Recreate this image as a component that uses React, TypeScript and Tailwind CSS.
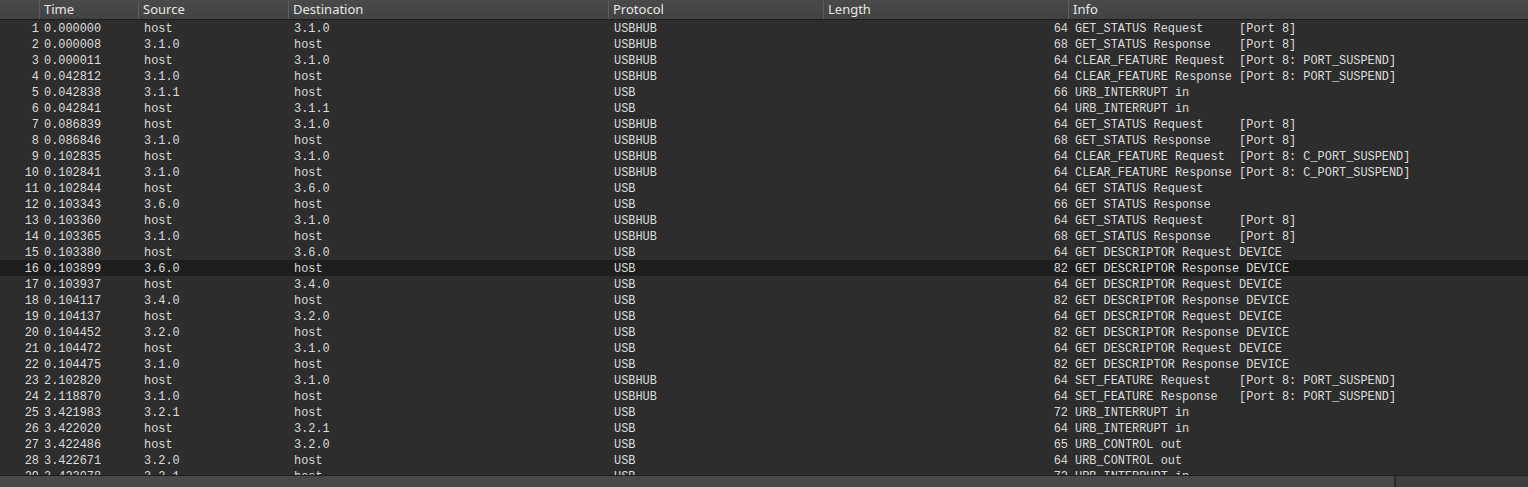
import React from 'react';

type Row = [number, string, string, string, string, number, string];

const ROWS: Row[] = [
  [1, '0.000000', 'host', '3.1.0', 'USBHUB', 64, 'GET_STATUS Request     [Port 8]'],
  [2, '0.000008', '3.1.0', 'host', 'USBHUB', 68, 'GET_STATUS Response    [Port 8]'],
  [3, '0.000011', 'host', '3.1.0', 'USBHUB', 64, 'CLEAR_FEATURE Request  [Port 8: PORT_SUSPEND]'],
  [4, '0.042812', '3.1.0', 'host', 'USBHUB', 64, 'CLEAR_FEATURE Response [Port 8: PORT_SUSPEND]'],
  [5, '0.042838', '3.1.1', 'host', 'USB', 66, 'URB_INTERRUPT in'],
  [6, '0.042841', 'host', '3.1.1', 'USB', 64, 'URB_INTERRUPT in'],
  [7, '0.086839', 'host', '3.1.0', 'USBHUB', 64, 'GET_STATUS Request     [Port 8]'],
  [8, '0.086846', '3.1.0', 'host', 'USBHUB', 68, 'GET_STATUS Response    [Port 8]'],
  [9, '0.102835', 'host', '3.1.0', 'USBHUB', 64, 'CLEAR_FEATURE Request  [Port 8: C_PORT_SUSPEND]'],
  [10, '0.102841', '3.1.0', 'host', 'USBHUB', 64, 'CLEAR_FEATURE Response [Port 8: C_PORT_SUSPEND]'],
  [11, '0.102844', 'host', '3.6.0', 'USB', 64, 'GET STATUS Request'],
  [12, '0.103343', '3.6.0', 'host', 'USB', 66, 'GET STATUS Response'],
  [13, '0.103360', 'host', '3.1.0', 'USBHUB', 64, 'GET_STATUS Request     [Port 8]'],
  [14, '0.103365', '3.1.0', 'host', 'USBHUB', 68, 'GET_STATUS Response    [Port 8]'],
  [15, '0.103380', 'host', '3.6.0', 'USB', 64, 'GET DESCRIPTOR Request DEVICE'],
  [16, '0.103899', '3.6.0', 'host', 'USB', 82, 'GET DESCRIPTOR Response DEVICE'],
  [17, '0.103937', 'host', '3.4.0', 'USB', 64, 'GET DESCRIPTOR Request DEVICE'],
  [18, '0.104117', '3.4.0', 'host', 'USB', 82, 'GET DESCRIPTOR Response DEVICE'],
  [19, '0.104137', 'host', '3.2.0', 'USB', 64, 'GET DESCRIPTOR Request DEVICE'],
  [20, '0.104452', '3.2.0', 'host', 'USB', 82, 'GET DESCRIPTOR Response DEVICE'],
  [21, '0.104472', 'host', '3.1.0', 'USB', 64, 'GET DESCRIPTOR Request DEVICE'],
  [22, '0.104475', '3.1.0', 'host', 'USB', 82, 'GET DESCRIPTOR Response DEVICE'],
  [23, '2.102820', 'host', '3.1.0', 'USBHUB', 64, 'SET_FEATURE Request    [Port 8: PORT_SUSPEND]'],
  [24, '2.118870', '3.1.0', 'host', 'USBHUB', 64, 'SET_FEATURE Response   [Port 8: PORT_SUSPEND]'],
  [25, '3.421983', '3.2.1', 'host', 'USB', 72, 'URB_INTERRUPT in'],
  [26, '3.422020', 'host', '3.2.1', 'USB', 64, 'URB_INTERRUPT in'],
  [27, '3.422486', 'host', '3.2.0', 'USB', 65, 'URB_CONTROL out'],
  [28, '3.422671', '3.2.0', 'host', 'USB', 64, 'URB_CONTROL out'],
  [29, '3.423078', '3.2.1', 'host', 'USB', 72, 'URB_INTERRUPT in'],
];

const COLS = 'grid-cols-[40px_99px_150px_320px_215px_245px_1fr]';
const HEADERS = ['', 'Time', 'Source', 'Destination', 'Protocol', 'Length', 'Info'];

export default function App() {
  return (
    <div className="flex h-[487px] w-[1528px] flex-col overflow-hidden bg-[#2d2d2d] text-[#dcdcdc]">
      <div
        className={`grid ${COLS} h-[20px] shrink-0 border-b border-[#1c1c1c] bg-gradient-to-b from-[#4a4a4a] to-[#424242] text-[13px] leading-[19px] text-[#e6e6e6]`}
        style={{ fontFamily: '"Noto Sans", "Open Sans", sans-serif' }}
      >
        {HEADERS.map((h, i) => (
          <div
            key={i}
            className={`truncate pl-[4px] ${i < HEADERS.length - 1 ? 'border-r border-[#5c5c5c]' : ''}`}
          >
            {h}
          </div>
        ))}
      </div>

      <div
        className="min-h-0 flex-1 overflow-hidden text-[11.9px] leading-[14px]"
        style={{ fontFamily: '"Liberation Mono", "DejaVu Sans Mono", monospace' }}
      >
        {ROWS.map(([no, time, src, dst, proto, len, info]) => (
          <div
            key={no}
            className={`grid ${COLS} h-[16px] pt-[2px] whitespace-pre ${no === 16 ? 'bg-[#1e1e1e]' : ''}`}
          >
            <div className="pr-[1px] text-right">{no}</div>
            <div className="pl-[4px]">{time}</div>
            <div className="pl-[5px]">{src}</div>
            <div className="pl-[5px]">{dst}</div>
            <div className="pl-[5px]">{proto}</div>
            <div className="pr-[1px] text-right">{len}</div>
            <div className="pl-[6px]">{info}</div>
          </div>
        ))}
      </div>

      <div className="flex h-[12px] shrink-0 border-t border-[#1e1e1e] bg-[#3f3f3f]">
        <div className="w-[1396px] border-r-2 border-[#2a2a2a] bg-[#494949]" />
        <div className="flex-1" />
      </div>
    </div>
  );
}
